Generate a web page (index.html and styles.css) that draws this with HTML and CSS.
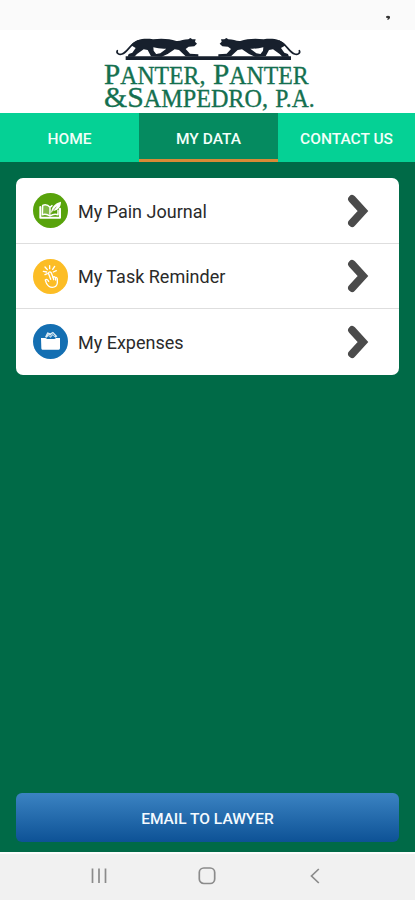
FILE: index.html
```html
<!DOCTYPE html>
<html lang="en">
<head>
<meta charset="utf-8">
<title>My Data</title>
<link rel="stylesheet" href="styles.css">
</head>
<body>
<div class="app">
  <div class="status"><svg class="status-mark" viewBox="0 0 6 8"><path d="M1 3.500Q3 2 5 3.500V5Q4 7 2 7L3 5.500L1 4.500Z" fill="#333"/></svg></div>
  <header class="brand">
    <svg class="logo" viewBox="0 0 690 249" role="img" aria-label="Panter, Panter &amp; Sampedro, P.A.">
      <defs>
        <g id="panther">
          <path d="M67 62C63 69 72 75 81 72C99 66 104 43 128 33" fill="none" stroke="#17202d" stroke-width="5" stroke-linecap="round"/>
          <path d="M108 46C122 28 146 24 174 28C202 24 224 27 244 33C256 34 266 28 280 28L286 24L292 28L302 28L300 35L306 41L298 49L281 50L272 57L285 71L310 73L310 80L272 79L252 60L239 58L218 72L200 80L178 79L180 73L196 70L214 56C200 57 187 55 175 52L176 62L184 73L195 75L195 80L168 79L158 60L146 58L126 72L118 80L98 80L101 72L112 68L122 54Z" fill="#17202d"/>
        </g>
      </defs>
      <use href="#panther"/>
      <use href="#panther" transform="translate(680 0) scale(-1 1)"/>
      <path d="M92 79H588V90H92Z" fill="#17202d"/>
      <g class="wordmark">
        <text x="27" y="161" textLength="304" lengthAdjust="spacingAndGlyphs"><tspan class="cap">P</tspan>ANTER,</text>
        <text x="354" y="161" textLength="287" lengthAdjust="spacingAndGlyphs"><tspan class="cap">P</tspan>ANTER</text>
        <text x="27" y="232" textLength="492" lengthAdjust="spacingAndGlyphs"><tspan class="cap">&amp;S</tspan>AMPEDRO,</text>
        <text x="541" y="232" textLength="118" lengthAdjust="spacingAndGlyphs">P.A.</text>
      </g>
    </svg>
  </header>
  <nav class="tabs">
    <a class="tab">HOME</a>
    <a class="tab active">MY DATA</a>
    <a class="tab">CONTACT US</a>
  </nav>
  <main class="content">
    <ul class="menu">
      <li class="row">
        <svg class="icon" viewBox="0 0 105 105"><circle cx="52.500" cy="52.500" r="52.500" fill="#58a30b"/>
          <path d="M28 38Q42 32 51 43V68Q40 61 28 65Z" fill="#fff" fill-opacity=".25"/>
          <g fill="none" stroke="#fff" stroke-width="4.500" stroke-linejoin="round" stroke-linecap="round"><path d="M29 37Q42 32 51 43V69Q40 61 28 65ZM51 69Q62 61 75 65V52M51 43L57 38"/><path d="M22 42V74H81V47" stroke-width="6"/></g>
          <path d="M54 61C56 41 65 31 84 26C84 41 76 51 61 54Z" fill="#fff"/><path d="M51 65L70 41" stroke="#8aa74c" stroke-width="2.500"/></svg>
        <span class="label">My Pain Journal</span>
        <svg class="chevron" viewBox="0 0 22 34"><path d="M5 5L16 17L5 29"/></svg>
      </li>
      <li class="row">
        <svg class="icon" viewBox="0 0 105 105"><circle cx="52.500" cy="52.500" r="52.500" fill="#fcbd25"/>
          <g fill="none" stroke="#fff" stroke-width="4" stroke-linecap="round" stroke-linejoin="round"><path d="M50 20V29M36 24L43 32M65 22L59 31M31 37L41 39M70 35L61 39M36 47L43 44"/><path d="M53 61L46 42Q50 35 55 42L60 55Q64 50 67 56Q71 53 73 60V72Q71 85 58 85Q46 85 40 72L37 63Q42 58 47 67"/><path d="M60 55L62 62M67 56L68 63"/></g></svg>
        <span class="label">My Task Reminder</span>
        <svg class="chevron" viewBox="0 0 22 34"><path d="M5 5L16 17L5 29"/></svg>
      </li>
      <li class="row">
        <svg class="icon" viewBox="0 0 105 105"><circle cx="52.500" cy="52.500" r="52.500" fill="#146fb2"/>
          <path d="M24 42H37L43 45H64L70 42H81V73Q81 77 77 77H28Q25 77 25 73Z" fill="#fff"/>
          <path d="M36 39L43 25L52 28L60 23L73 37L68 41L59 34L53 41L46 36L41 41Z" fill="#d9eaf4"/><path d="M46 32L51 37L59 29L65 36" fill="none" stroke="#428dc1" stroke-width="3"/></svg>
        <span class="label">My Expenses</span>
        <svg class="chevron" viewBox="0 0 22 34"><path d="M5 5L16 17L5 29"/></svg>
      </li>
    </ul>
    <button class="email">EMAIL TO LAWYER</button>
  </main>
  <footer class="system">
    <svg viewBox="0 0 24 24"><path d="M5.500 4.500V19M12 4.500V19M18.500 4.500V19"/></svg>
    <svg viewBox="0 0 24 24"><rect x="4.300" y="4" width="15.400" height="15.500" rx="4.500"/></svg>
    <svg viewBox="0 0 24 24"><path d="M15.800 5L8.500 12L15.800 19"/></svg>
  </footer>
</div>
</body>
</html>
```
FILE: styles.css
```css
* { box-sizing: border-box; }
body { margin: 0; font-family: Roboto, "Liberation Sans", sans-serif; }
.app { width: 415px; height: 900px; display: flex; flex-direction: column; background: #006a47; }
.status { height: 30px; background: #fafafa; display: flex; justify-content: flex-end; padding: 13px 24px 0 0; }
.status-mark { width: 6px; height: 8px; }
.brand { height: 83px; padding-left: 95px; background: #fff; }
.logo { display: block; width: 230px; height: 83px; }
.wordmark { fill: #14704f; stroke: #14704f; stroke-width: 1; font-family: "Liberation Serif", serif; font-size: 73px; }
.cap { font-size: 90px; }
.tabs { height: 49px; display: grid; grid-template-columns: 139px 139px 137px; background: #05d195; }
.tab { display: flex; align-items: center; justify-content: center; padding-top: 2px; color: #f2fff9; font-size: 15.500px; font-weight: 500; white-space: nowrap; }
.active { background: #058b60; box-shadow: inset 0 -3px #d98a36; }
.content { flex: 1; display: flex; flex-direction: column; justify-content: space-between; padding: 16px 16px 10px; }
.menu { list-style: none; margin: 0; padding: 0; height: 197px; display: grid; grid-template-rows: 65px 65px 67px; background: #fff; border-radius: 7px; overflow: hidden; }
.row { display: flex; align-items: center; padding: 0 30px 0 17px; }
.row + .row { border-top: 1px solid #dedede; }
.row:last-child { padding-bottom: 1px; }
.icon { width: 35px; height: 35px; margin-right: 10px; flex: none; }
.label { flex: 1; color: #2a2a2a; font-size: 18px; padding-top: 1px; }
.chevron { width: 22px; height: 34px; fill: none; stroke: #4b4b4b; stroke-width: 7.800; stroke-linecap: round; stroke-linejoin: miter; }
.email { height: 49px; border: 0; border-radius: 6px; background: linear-gradient(#3b83c2, #0d5296); color: #f4faff; font: 500 15.500px Roboto, "Liberation Sans", sans-serif; padding: 2px 0 0; }
.system { height: 48px; display: flex; align-items: center; justify-content: center; gap: 84px; background: #f1f1f1; border-top: 2px solid #fdfdfd; padding: 0 2px 3px 0; }
.system svg { width: 24px; height: 24px; fill: none; stroke: #8b8b8b; stroke-width: 1.700; }
```
